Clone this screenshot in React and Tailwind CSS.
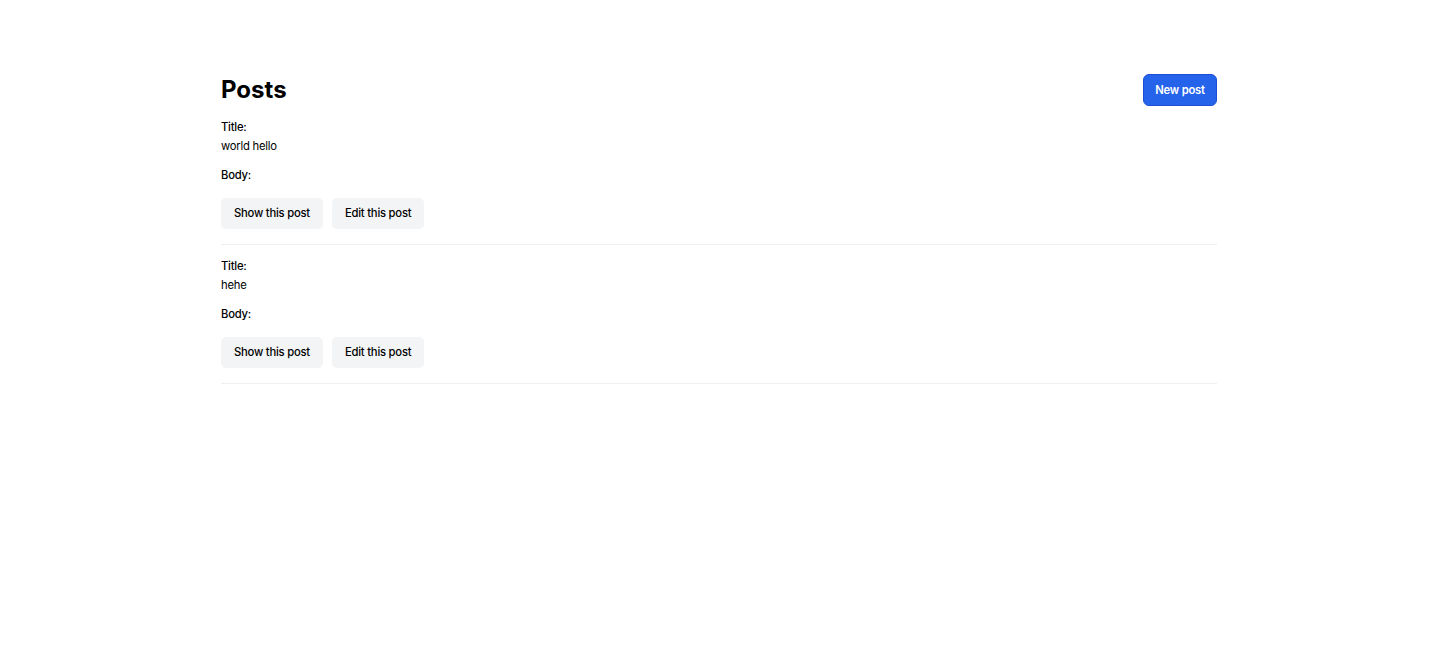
import React from 'react';

const posts = [
  { id: 1, title: 'world hello', body: '' },
  { id: 2, title: 'hehe', body: '' },
];

function PostItem({ post }) {
  return (
    <div className="pt-3 pb-[15px] border-b border-[#eeeff1]">
      <p className="font-medium leading-[18px]">Title:</p>
      <p className="leading-[18px] mt-px">{post.title}</p>
      <p className="font-medium leading-[18px] mt-[11px]">Body:</p>
      <p className="leading-[18px] hidden">{post.body}</p>
      <div className="flex gap-[9px] mt-[14px]">
        <a className="h-[31px] px-[13px] flex items-center rounded-[5px] bg-[#f3f4f6] font-medium cursor-pointer">
          Show this post
        </a>
        <a className="h-[31px] px-[13px] flex items-center rounded-[5px] bg-[#f3f4f6] font-medium cursor-pointer">
          Edit this post
        </a>
      </div>
    </div>
  );
}

export default function App() {
  return (
    <div className="min-h-screen bg-white text-black text-[11.25px] tracking-[-0.02em] font-['Inter',sans-serif]">
      <main className="w-[996px] mx-auto pt-[74px]">
        {/* Header */}
        <div className="flex items-center justify-between h-8">
          <h1 className="text-[24px] font-bold leading-8 tracking-normal">Posts</h1>
          <a className="h-8 w-[74px] flex items-center justify-center rounded-md border border-[#1d4ed8] bg-[#2563eb] text-white font-semibold cursor-pointer">
            New post
          </a>
        </div>

        {/* Posts list */}
        <div>
          {posts.map((p) => (
            <PostItem key={p.id} post={p} />
          ))}
        </div>
      </main>
    </div>
  );
}
